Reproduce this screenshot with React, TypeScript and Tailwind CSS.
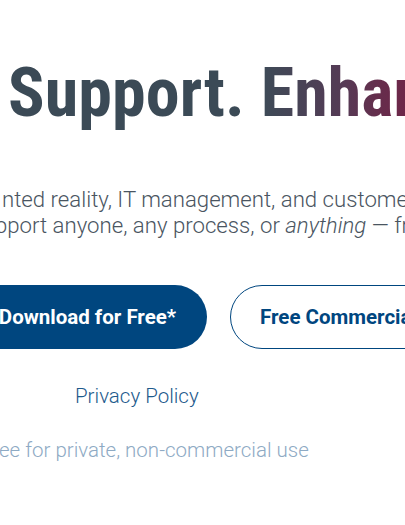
import React from "react";

export default function App() {
  return (
    <div className="w-[405px] h-[525px] overflow-hidden bg-white font-['Roboto','Liberation_Sans',sans-serif]">
      <div className="pt-[59px] pl-[8px] whitespace-nowrap">
        <h1 className="font-['Roboto_Condensed','Roboto',sans-serif] font-bold text-[68px] leading-[68px] text-[#3b4a56] tracking-[0.1px]">
          Support.{" "}
          <span className="bg-[linear-gradient(90deg,#3d4b57_0%,#553a55_29%,#662d4c_42%,#6e2548_52%,#7a1f46_100%)] bg-clip-text text-transparent">
            Enhanced.
          </span>
        </h1>
      </div>

      <div className="mt-[59px] text-[22.2px] leading-[26px] font-light text-[#4a5561] whitespace-nowrap">
        <p className="ml-[2px]">nted reality, IT management, and customer service</p>
        <p className="ml-[-5px]">
          pport anyone, any process, or <em>anything</em> — from anywhere
        </p>
      </div>

      <div className="mt-[47px] flex gap-[23px] whitespace-nowrap ml-[-32px]">
        <button className="h-[64px] w-[239px] shrink-0 rounded-full bg-[#00467f] text-white font-bold text-[20.5px] flex items-center justify-center">
          Download for Free*
        </button>
        <button className="h-[64px] shrink-0 rounded-full border border-[#00467f] text-[#00467f] font-bold text-[20.5px] pl-[29px] pr-[30px] flex items-center">
          Free Commercial Trial
        </button>
      </div>

      <div className="mt-[33px] pl-[75px]">
        <a className="text-[20.5px] leading-[28px] font-light text-[#1d5a8c]">Privacy Policy</a>
      </div>

      <div className="mt-[26px] ml-[-1px] whitespace-nowrap">
        <p className="text-[20.5px] leading-[28px] font-light text-[#8eaac4]">
          ee for private, non-commercial use
        </p>
      </div>
    </div>
  );
}
